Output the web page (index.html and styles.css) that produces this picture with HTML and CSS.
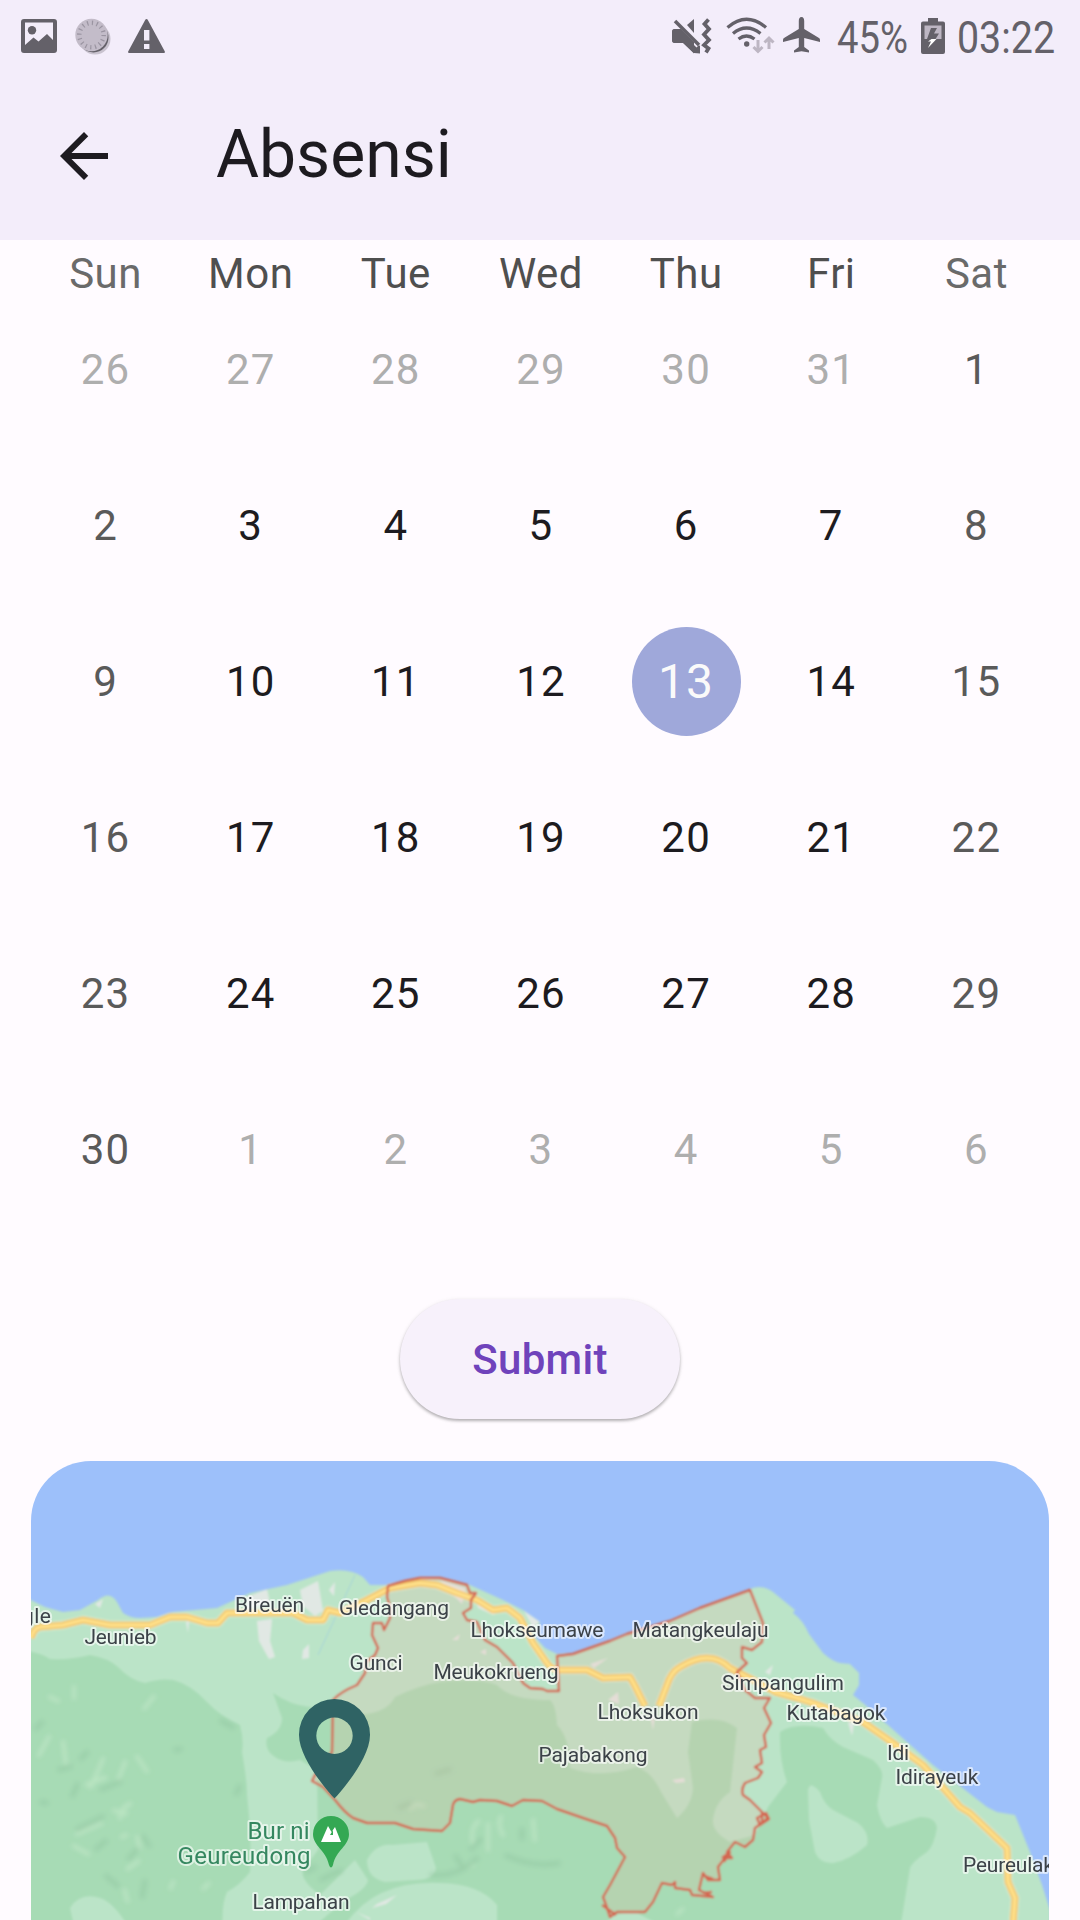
FILE: index.html
```html
<!DOCTYPE html>
<html lang="id">
<head>
<meta charset="utf-8">
<title>Absensi</title>
<link rel="stylesheet" href="styles.css">
</head>
<body>
<header class="header">
  <div class="status">
    <div class="status-left">
      <svg class="ic-image" viewBox="0 0 36 34"><path fill="#646169" fill-rule="evenodd" d="M3 0h30a3 3 0 0 1 3 3v28a3 3 0 0 1-3 3H3a3 3 0 0 1-3-3V3a3 3 0 0 1 3-3zm1 3.500V26l8.500-7.500 5 4L26 15l6 6V3.500z"/><circle cx="11" cy="11.300" r="4.200" fill="#646169"/></svg>
      <svg class="ic-disc" viewBox="0 0 36 38"><circle cx="20" cy="21" r="15.500" fill="#c9c3cf"/><circle cx="18.500" cy="19.500" r="15" fill="#646169"/><circle cx="16.500" cy="17" r="16.200" fill="#c3bcc9"/><circle cx="16.500" cy="17" r="12.200" fill="none" stroke="#9a94a1" stroke-width="4.500" stroke-dasharray="1.200 3.591"/></svg>
      <svg class="ic-warn" viewBox="0 0 37 34"><path fill="#646169" fill-rule="evenodd" d="M17.300.8a1.400 1.400 0 0 1 2.400 0L36.700 32.300a1.100 1.100 0 0 1-1 1.700H1.300a1.100 1.100 0 0 1-1-1.700zM16 11v10.500h5.400V11zm0 14v5h5.400v-5z"/></svg>
    </div>
    <div class="status-right">
      <svg class="ic-mute" viewBox="0 0 40 38"><g fill="#646169"><path d="M0 14q0-3 3-3h5L28 28v7.500L22 35 11.500 25H3q-3 0-3-3z"/><path d="M22 1v14l-7-8z"/></g><path d="M3 3l24 24" stroke="#f3edfa" stroke-width="7"/><path d="M3 3l24 24" stroke="#646169" stroke-width="3.600"/><path d="M22 24v11.500L11 25H3q-3 0-3-3v-8q0-3 3-3h6z" fill="#646169"/><path d="M36.500 1.500L32.500 6l4.500 5-5 5.500 5 5.500-5 5 4.500 3.500-2.500 4" fill="none" stroke="#646169" stroke-width="3.800"/></svg>
      <svg class="ic-wifi" viewBox="0 0 49 38"><g fill="none" stroke="#646169" stroke-width="3.300"><path d="M1.500 10.500Q20.500-6 40 10.500"/><path d="M7 16.500q13.500-11 27.500 0"/><path d="M12.500 22q8-6 16 0"/></g><circle cx="20.700" cy="27" r="2.700" fill="#646169"/><g fill="none" stroke="#bdb6c3" stroke-width="3"><path d="M32 23v11M27.500 30l4.500 4.500 4.500-4.500M43 32V21M38.500 25.500L43 21l4.500 4.500"/></g></svg>
      <svg class="ic-plane" viewBox="0 0 37 36"><path fill="#646169" d="M18.500 0c-2 0-2.700 2-2.700 4v8L1 21Q0 21.700 0 23v2l15.800-4v9L11 33.500V35.500l7.500-1.300 7.500 1.300V33.500L21.200 30v-9L37 25v-2q0-1.300-1-2L21.200 12V4c0-2-.7-4-2.700-4z"/></svg>
      <svg class="status-text st-pct" viewBox="0 0 76 56"><text x="1" y="36" textLength="71" lengthAdjust="spacingAndGlyphs">45%</text></svg>
      <svg class="ic-batt" viewBox="0 0 24 36"><path fill="#646169" d="M7 0h10v3.500h5a2 2 0 0 1 2 2V34a2 2 0 0 1-2 2H2a2 2 0 0 1-2-2V5.500a2 2 0 0 1 2-2h5z"/><path fill="#bdb6c3" d="M3.500 7.500h17V21h-17z"/><path fill="#646169" d="M10 10h6l-3 5.500h5L14.500 21H6z"/><path fill="#fff" d="M10.500 21h5L7 30l3-6.500H7z"/></svg>
      <svg class="status-text st-time" viewBox="0 0 102 56"><text x="1" y="36" textLength="98" lengthAdjust="spacingAndGlyphs">03:22</text></svg>
    </div>
  </div>
  <div class="appbar">
    <svg class="back" viewBox="0 0 24 24"><path fill="#1d1b20" d="M20 11H7.830l5.590-5.590L12 4l-8 8 8 8 1.410-1.410L7.830 13H20v-2z"/></svg>
    <h1 class="title">Absensi</h1>
  </div>
</header>
<main class="content">
  <div class="weekdays"><span class="wk">Sun</span><span>Mon</span><span>Tue</span><span>Wed</span><span>Thu</span><span>Fri</span><span class="wk">Sat</span></div>
  <div class="days">
    <span class="out">26</span><span class="out">27</span><span class="out">28</span><span class="out">29</span><span class="out">30</span><span class="out">31</span><span class="end">1</span>
    <span class="end">2</span><span>3</span><span>4</span><span>5</span><span>6</span><span>7</span><span class="end">8</span>
    <span class="end">9</span><span>10</span><span>11</span><span>12</span><span><b class="today">13</b></span><span>14</span><span class="end">15</span>
    <span class="end">16</span><span>17</span><span>18</span><span>19</span><span>20</span><span>21</span><span class="end">22</span>
    <span class="end">23</span><span>24</span><span>25</span><span>26</span><span>27</span><span>28</span><span class="end">29</span>
    <span class="end">30</span><span class="out">1</span><span class="out">2</span><span class="out">3</span><span class="out">4</span><span class="out">5</span><span class="out">6</span>
  </div>
  <button class="submit">Submit</button>
  <div class="map">
    <svg class="map-svg" viewBox="31 1461 1018 459">
      <defs>
        <filter id="soft" x="-5%" y="-5%" width="110%" height="110%"><feGaussianBlur stdDeviation="0.8"/></filter>
        <filter id="relief" x="-20%" y="-20%" width="140%" height="140%"><feGaussianBlur stdDeviation="2.200"/></filter>
        <clipPath id="land"><path id="coast" d="M20 1596L31 1600 45 1607 63 1612 80 1610 98 1600Q110 1590 117 1602L123 1613Q130 1618 140 1618L157 1617 173 1612 217 1608 250 1593 287 1585 330 1571Q350 1568 363 1577L370 1585 387 1585 420 1577 440 1578 470 1585 503 1600 523 1610 540 1622 536 1638 545 1648 557 1654 573 1653 610 1640 627 1633 670 1620 700 1607 750 1589Q762 1584 773 1592L795 1610 793 1613Q803 1620 809 1634L823 1653Q832 1661 840 1663L850 1664 859 1673V1685L853 1695 863 1703 907 1742 933 1765 987 1807 997 1812 1015 1815 1030 1852 1042 1885 1050 1910V1930H20z"/></clipPath>
        <path id="region" d="M387 1597L388 1586 405 1581 420 1578 440 1578 467 1585 470 1593 476 1593 471 1600V1608L463 1613 467 1620 477 1622 485 1640 497 1647 513 1663 523 1683 530 1688 543 1689 547 1691 559 1691 557 1656 573 1654 590 1648 610 1641 627 1634 670 1621 700 1608 750 1590 763 1623 762 1642 752 1650 742 1647V1658L747 1663 737 1672 745 1690 755 1698 770 1698 764 1708 771 1723 764 1735 766 1747 760 1750 762 1763 755 1767 762 1772 758 1778 745 1783Q741 1789 743 1795L750 1800 760 1810 768 1818 762 1823 755 1828 753 1840 745 1847 735 1842 727 1852 732 1858 725 1858 718 1867 720 1880H708L703 1873 699 1890 713 1897 692 1895 690 1890 675 1888V1882L672 1885 662 1883 653 1902 645 1912H617L610 1917 606 1905 603 1897 610 1885 625 1857 617 1848 615 1838 607 1826 583 1818 557 1809 542 1801 523 1800 512 1806 497 1801 480 1800 473 1802 460 1799Q454 1800 453 1805L450 1823 442 1831 413 1829 395 1823 367 1823 353 1818Q345 1813 335 1800L323 1787 312 1781 315 1775 332 1752 333 1700Q340 1692 357 1685L365 1673 366 1662 375 1655 378 1648 372 1635 373 1623 382 1623 384 1630 390 1618V1607z"/>
        <path id="road" d="M31 1638Q34 1628 40 1627L63 1625 83 1620 110 1625H150L170 1617 187 1617 207 1623 218 1623 227 1613 250 1613 293 1613 307 1620 323 1620 328 1610 340 1613 367 1600 390 1588 420 1583 437 1585 457 1593 477 1600 493 1610 507 1608 520 1618 533 1643 547 1663Q552 1670 560 1670H587L603 1678 630 1677 635 1686 645 1706M659 1706L667 1685Q671 1672 680 1667 695 1658 707 1658 720 1658 730 1668L753 1680 775 1692 797 1698 813 1703 863 1722 893 1743 923 1765 960 1807 970 1813 1007 1848 1008 1882 1015 1898 1013 1925"/>
      </defs>
      <path class="sea" d="M31 1461h1018v459H31z"/>
      <g filter="url(#soft)">
        <use href="#coast" class="land"/>
        <g clip-path="url(#land)">
          <path class="forest" d="M20 1650Q40 1652 50 1659 72 1660 90 1655 108 1658 118 1667 130 1680 145 1683 160 1678 173 1680 190 1684 207 1702 220 1716 240 1725 244 1740 242 1752 247 1780 247 1795 252 1840 250 1872 240 1885 227 1892 221 1905 223 1930H20z"/>
          <path class="forest" d="M273 1693Q290 1705 310 1707L345 1715Q385 1717 395 1697 420 1685 440 1682 480 1678 497 1685 510 1700 550 1700 556 1705 557 1725 570 1738 570 1768 600 1779 637 1767 652 1772 661 1792L677 1818Q692 1805 693 1788L688 1752 692 1722Q720 1715 737 1728L730 1792Q715 1802 713 1820 712 1832 730 1842L755 1835Q764 1815 768 1807L787 1782Q779 1760 780 1732 795 1722 823 1728 830 1740 843 1747L873 1760Q884 1770 882 1778L877 1805Q880 1822 887 1828L920 1817Q936 1817 937 1828 934 1846 927 1852 912 1862 910 1868L900 1930H310L345 1900Q366 1890 368 1880L355 1860 320 1895Q300 1880 303 1870L318 1850 317 1770 300 1760Q285 1764 275 1757 264 1750 267 1738 282 1731 282 1718z"/>
          <g class="land">
            <path d="M70 1908Q80 1892 100 1898 115 1903 130 1930H75z"/>
            <path d="M808 1790Q810 1780 820 1792 824 1804 833 1810L858 1823Q870 1833 867 1845 850 1860 833 1863 820 1864 815 1852L809 1820z"/>
            <path d="M367 1860Q376 1843 392 1845L427 1842 436 1868Q435 1880 415 1880L385 1882Q367 1878 367 1860z"/>
            <path d="M345 1925Q375 1880 440 1883 480 1884 497 1905V1930H345z"/>
            <path d="M605 1925Q612 1912 635 1912L660 1925z"/>
          </g>
          <g class="urban">
            <path d="M300 1590l18-9 5 30-8 5-12-10zM247 1597l20-8 3 14-23 6zM257 1621l15-2-2 22 5 16-6 2-10-18zM303 1650l6-6v14l-7 1zM95 1604l8-5-3 9zM329 1590l6-8-1 14zM186 1622l3-1-1 12zM440 1580l26 8-4 16-14-14zM524 1611l16 10-7 7zM476 1600l20 10-2 5-16-7zM452 1640l8-6-2 6zM590 1664l18-6-14 10zM608 1700l10-8 1 12zM480 1652l6-3v6zM672 1780l12-2 1 4-9 1zM377 1904l20-9-11 9-14 4z"/>
            <path d="M356 1912l14 8v-2zM372 1910l8-6zM848 1722l4 14 2-13zM650 1715l3 15 2-14zM765 1672l8-7-3 10z"/>
          </g>
          <path d="M355 1575L318 1655" stroke="#a5d3d8" stroke-width="1" fill="none"/>
          <g class="relief" filter="url(#relief)">
            <path class="hi" d="M48 1696l12 6M74 1685v15M143 1710l12-15M50 1735l-12 22M63 1740l3 25M104 1757l-14 32M85 1785l22-8M118 1780l8-20M136 1755l12 18M75 1835l28-12M72 1845l18 10M112 1810l16 4M140 1860l-14 10M124 1888l4 15M170 1890l4-10M202 1890l8-8M120 1838l8-4M120 1820q0-13 12-17M137 1835l3 15M502 1815q-6 8 2 22M533 1818l2 24M480 1820q-12 8-6 28M488 1822v30M463 1868l12-4M410 1810q5-9 15-3M676 1915l8-7"/>
            <path class="lo" d="M35 1730l8-9M40 1802l8 1M58 1770l14-4M80 1760l8-9M78 1783l-6 14M100 1790l22-9M76 1830l28-14M95 1850l12-10M128 1860l10-12M142 1835l8 12M105 1875l14 12M145 1880l-3 18M236 1795l4-10M220 1720l14 8M174 1750l8-1M435 1774l16-5M470 1850l12-12M455 1855l9 14M522 1828v12M505 1855q28 13 55 8M430 1875q30 2 48-18M398 1808l14-5M320 1880l22-10M306 1872l10-6"/>
          </g>
        </g>
        <use href="#region" class="region"/>
        <use href="#road" class="road-halo"/><use href="#road" class="road-edge"/><use href="#road" class="road"/>
        <use href="#region" class="border"/>
        <path d="M757 1818l9-5 3 6-9 6zM762 1812v12M602 1905l14 10M722 1858l8-6-6 10M704 1876l9 3M703 1893l9-1" class="border"/>
      </g>
      <g class="labels">
        <text x="22" y="1623" textLength="29">gle</text>
        <text x="84.500" y="1644" textLength="72">Jeunieb</text>
        <text x="235" y="1611.500" textLength="69">Bireuën</text>
        <text x="339" y="1614.500" textLength="110">Gledangang</text>
        <text x="349.500" y="1669.500" textLength="53">Gunci</text>
        <text x="470.500" y="1636.500" textLength="133">Lhokseumawe</text>
        <text x="632.500" y="1636.500" textLength="136">Matangkeulaju</text>
        <text x="433.500" y="1678.500" textLength="125">Meukokrueng</text>
        <text x="722" y="1690" textLength="122">Simpangulim</text>
        <text x="597.500" y="1718.500" textLength="101">Lhoksukon</text>
        <text x="786.500" y="1719.500" textLength="99">Kutabagok</text>
        <text x="538.500" y="1761.500" textLength="109">Pajabakong</text>
        <text x="887" y="1759.500" textLength="22">Idi</text>
        <text x="895.500" y="1783.500" textLength="83">Idirayeuk</text>
        <text x="963" y="1872" textLength="91">Peureulak</text>
        <text x="252.500" y="1908.500" textLength="97">Lampahan</text>
        <g class="peak"><text x="247.500" y="1838.500" textLength="62">Bur ni</text><text x="177.500" y="1863.500" textLength="133">Geureudong</text></g>
      </g>
      <g class="peak-pin">
        <path fill="#34a853" d="M331 1816a18 18 0 0 1 18 18c0 12-13 16-16 31q-2 5-4 0c-3-15-16-19-16-31a18 18 0 0 1 18-18z"/>
        <path fill="#fff" d="M321 1842l7-16 3.500 6 3.500-5 6 15z"/><path d="M333 1830l-3 5h3z" fill="#34a853"/>
      </g>
      <path fill="#2f6364" fill-rule="evenodd" d="M334.500 1699a35.500 35.500 0 0 1 35.500 36c0 26-35.500 63.500-35.500 63.500S299 1761 299 1735a35.500 35.500 0 0 1 35.500-36zm0 18.500a18.200 18.200 0 1 0 0 36.400 18.200 18.200 0 0 0 0-36.400z"/>
    </svg>
  </div>
</main>
</body>
</html>
```
FILE: styles.css
```css
* { box-sizing: border-box; }
body {
  margin: 0;
  width: 1080px;
  height: 1920px;
  overflow: hidden;
  display: flex;
  flex-direction: column;
  background: #fffbff;
  color: #1d1b20;
  font-family: Roboto, "Liberation Sans", sans-serif;
}
svg { display: block; flex: none; }
.header { height: 240px; background: #f3edfa; flex: none; }
.status {
  height: 72px;
  padding: 0 22px 0 21px;
  display: flex;
  justify-content: space-between;
}
.status-left, .status-right { display: flex; align-items: flex-start; }
.status-left { padding-top: 18px; }
.ic-image { width: 36px; height: 34px; margin-top: 1px; }
.ic-disc { width: 36px; height: 38px; margin-left: 18px; }
.ic-warn { width: 37px; height: 34px; margin: 1px 0 0 17px; }
.status-right { padding-top: 17px; }
.ic-mute { width: 40px; height: 38px; margin-top: 1px; }
.ic-wifi { width: 49px; height: 38px; margin-left: 14px; }
.ic-plane { width: 37px; height: 36px; margin-left: 8px; }
.status-text { height: 56px; font-size: 45px; fill: #646169; }
.st-pct { width: 76px; margin-left: 16px; }
.ic-batt { width: 24px; height: 36px; margin: 1px 0 0 9px; }
.st-time { width: 102px; margin-left: 11px; }
.appbar { height: 168px; padding-left: 48px; display: flex; align-items: center; }
.back { width: 72px; height: 72px; }
.title { margin: 0 0 2px 96px; font-size: 66px; line-height: 84px; font-weight: 400; }

.content { padding: 0 31px; display: flex; flex-direction: column; align-items: center; }
.weekdays, .days {
  width: 1018px;
  padding-left: 2px;
  display: grid;
  grid-template-columns: repeat(7, 1fr);
  text-align: center;
  font-size: 42px;
  letter-spacing: 1.2px;
}
.weekdays { height: 51px; padding-top: 9px; line-height: 50px; letter-spacing: .5px; color: #4f4f4f; }
.weekdays .wk { color: #6a6a6a; }
.days { grid-auto-rows: 156px; }
.days > span { display: flex; align-items: center; justify-content: center; }
.days .out { color: #aeaeae; }
.days .end { color: #5a5a5a; }
.today {
  width: 109px;
  height: 109px;
  border-radius: 50%;
  background: #9fa8da;
  color: #fafafa;
  font-size: 48px;
  font-weight: 400;
  display: flex;
  align-items: center;
  justify-content: center;
}
.submit {
  width: 280px;
  height: 120px;
  margin: 72px 0 42px;
  border: 0;
  border-radius: 60px;
  background: #f7f1fb;
  color: #6f43bb;
  font: 500 42px Roboto, "Liberation Sans", sans-serif;
  letter-spacing: .3px;
  box-shadow: 0 2px 3px rgba(0, 0, 0, .26), 0 1px 5px rgba(0, 0, 0, .08);
}
.map { width: 1018px; height: 459px; border-radius: 60px 60px 0 0; overflow: hidden; }
.map-svg { width: 1018px; height: 459px; }
.sea { fill: #9dc0fa; }
.land { fill: #bbe4c8; }
.forest { fill: #a7dbb5; }
.urban { fill: #e1e8e4; }
.relief { fill: none; stroke-width: 4; opacity: .85; }
.hi { stroke: #bee6c5; }
.lo { stroke: #98cba6; }
.region { fill: rgba(242, 178, 160, .2); }
.border { fill: none; stroke: #d4654f; stroke-width: 2.400; stroke-linejoin: round; }
.road-halo, .road-edge, .road { fill: none; stroke-linejoin: round; }
.road-halo { stroke: rgba(250, 240, 205, .5); stroke-width: 9; }
.road-edge { stroke: #f2c05c; stroke-width: 6.500; }
.road { stroke: #fee08b; stroke-width: 3.600; }
.labels {
  font-size: 21px;
  font-weight: 400;
  fill: #3c4248;
  stroke: rgba(255, 255, 255, .6);
  stroke-width: 4px;
  paint-order: stroke;
  stroke-linejoin: round;
  filter: blur(.6px);
}
.peak { fill: #358760; font-size: 24px; }
.peak-pin { filter: blur(.5px); }
```
